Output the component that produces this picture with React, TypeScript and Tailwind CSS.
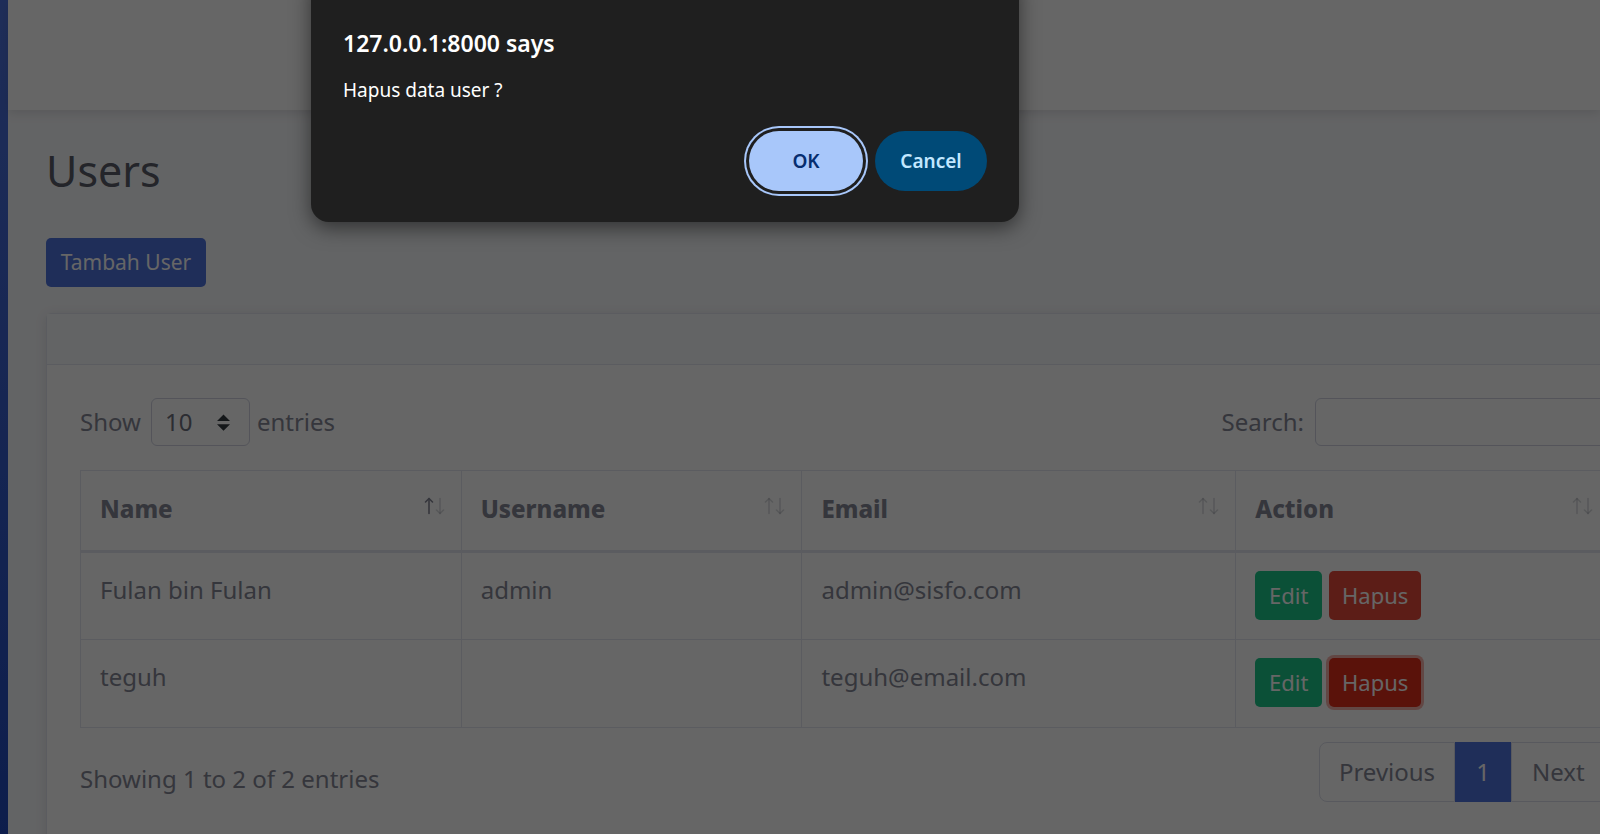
import React from "react";

const users = [
  { id: 1, name: "Fulan bin Fulan", username: "admin", email: "admin@sisfo.com", focused: false },
  { id: 2, name: "teguh", username: "", email: "teguh@email.com", focused: true },
];

const columns = [
  { label: "Name", width: "w-[381px]", active: true },
  { label: "Username", width: "w-[341px]", active: false },
  { label: "Email", width: "w-[434px]", active: false },
  { label: "Action", width: "w-[374px]", active: false },
];

// panah sort ala DataTables
const SortArrows = ({ active }: { active: boolean }) => (
  <svg width="22" height="18" viewBox="0 0 22 18" fill="none" strokeWidth="1.6" strokeLinecap="round" strokeLinejoin="round">
    <g className={active ? "stroke-[#858796]" : "stroke-[#858796]/30"}>
      <path d="M5 1.5V16.5" />
      <path d="M1.5 5L5 1.5L8.5 5" />
    </g>
    <g className="stroke-[#858796]/30">
      <path d="M16 1.5V16.5" />
      <path d="M12.5 13L16 16.5L19.5 13" />
    </g>
  </svg>
);

const SelectCaret = () => (
  <svg width="13" height="17" viewBox="0 0 4 5" className="fill-[#343a40]">
    <path d="M2 0L0 2h4zm0 5L0 3h4z" />
  </svg>
);

const App = () => {
  return (
    <div className="relative h-[834px] w-[1600px] overflow-hidden bg-[#f8f9fc] font-['Noto_Sans',sans-serif] text-[#858796]">
      <div className="flex h-full">
        {/* sidebar (hampir tertutup) */}
        <aside className="w-[8px] shrink-0 bg-gradient-to-b from-[#4e73df] to-[#224abe]" />

        <div className="min-w-0 flex-1">
          {/* topbar */}
          <header className="h-[110px] bg-white shadow-[0_3px_10px_rgba(58,59,69,0.15)]" />

          <main className="w-[1700px] pl-[38px]">
            <h1 className="mt-[35px] text-[43px] leading-[52px] font-normal text-[#5a5c69]">Users</h1>

            <button className="mt-[41px] h-[49px] w-[160px] rounded-[5px] bg-[#4e73df] text-[21px] text-white">
              Tambah User
            </button>

            {/* card tabel */}
            <div className="mt-[26px] rounded-[6px] border border-[#e3e6f0] bg-white shadow-[0_2px_12px_rgba(58,59,69,0.12)]">
              <div className="h-[51px] border-b border-[#e3e6f0] bg-[#f8f9fc]" />

              <div className="w-[1596px] px-[33px] pt-[33px] pb-[40px]">
                <div className="flex h-[48px] items-center justify-between text-[24px]">
                  <div className="flex items-center">
                    <span>Show</span>
                    <div className="ml-[10px] flex h-[48px] w-[99px] items-center justify-between rounded-[6px] border border-[#d1d3e2] pl-[13px] pr-[19px] text-[#6e707e]">
                      <span>10</span>
                      <SelectCaret />
                    </div>
                    <span className="ml-[7px]">entries</span>
                  </div>
                  <div className="flex items-center">
                    <span>Search:</span>
                    <div className="ml-[11px] h-[48px] w-[295px] rounded-[6px] border border-[#d1d3e2]" />
                  </div>
                </div>

                <table className="mt-[24px] table-fixed border-collapse text-[24px]">
                  <thead>
                    <tr>
                      {columns.map((col) => (
                        <th
                          key={col.label}
                          className={`${col.width} border border-b-[3px] border-[#e3e6f0] pl-[19px] pr-[15px] pt-[20px] pb-[23px] text-left align-top`}
                        >
                          <div className="flex h-[36px] items-start justify-between">
                            <span className="font-extrabold leading-[36px] text-[#858796]">{col.label}</span>
                            <span className="pt-[6px]">
                              <SortArrows active={col.active} />
                            </span>
                          </div>
                        </th>
                      ))}
                    </tr>
                  </thead>
                  <tbody>
                    {users.map((user) => (
                      <tr key={user.id}>
                        <td className="h-[88px] border border-[#e3e6f0] px-[19px] pt-[19px] align-top leading-[36px]">{user.name}</td>
                        <td className="border border-[#e3e6f0] px-[19px] pt-[19px] align-top leading-[36px]">{user.username}</td>
                        <td className="border border-[#e3e6f0] px-[19px] pt-[19px] align-top leading-[36px]">{user.email}</td>
                        <td className="border border-[#e3e6f0] px-[19px] pt-[18px] align-top">
                          <div className="flex gap-[7px] text-[22px]">
                            <button className="h-[49px] w-[67px] rounded-[5px] bg-[#1cc88a] text-white">Edit</button>
                            <button
                              className={
                                user.focused
                                  ? "h-[49px] w-[92px] rounded-[5px] bg-[#e02d1b] text-white ring-[3px] ring-[#eb6558]/50"
                                  : "h-[49px] w-[92px] rounded-[5px] bg-[#e74a3b] text-white"
                              }
                            >
                              Hapus
                            </button>
                          </div>
                        </td>
                      </tr>
                    ))}
                  </tbody>
                </table>

                <div className="mt-[14px] flex items-start justify-between text-[24px]">
                  <div className="pt-[19px] leading-[36px]">Showing 1 to 2 of 2 entries</div>
                  <div className="flex h-[60px]">
                    <div className="flex w-[136px] items-center justify-center rounded-l-[8px] border border-[#dddfeb] bg-white">
                      Previous
                    </div>
                    <div className="flex w-[56px] items-center justify-center border border-[#4e73df] bg-[#4e73df] text-white">
                      1
                    </div>
                    <div className="flex w-[99px] items-center rounded-r-[8px] border border-[#dddfeb] bg-white pl-[20px]">
                      Next
                    </div>
                  </div>
                </div>
              </div>
            </div>
          </main>
        </div>
      </div>

      {/* overlay dialog konfirmasi */}
      <div className="absolute inset-0 bg-black/60" />

      <div className="absolute left-[311px] top-[-30px] w-[708px] rounded-[18px] bg-[#1f1f1f] px-[32px] pt-[57px] pb-[31px] shadow-[0_6px_20px_rgba(0,0,0,0.5)] font-['Noto_Sans',sans-serif]">
        <div className="text-[23px] leading-[32px] font-semibold text-white">127.0.0.1:8000 says</div>
        <div className="mt-[19px] text-[19px] leading-[24px] text-white">Hapus data user ?</div>
        <div className="mt-[29px] flex justify-end gap-[12px]">
          <button className="h-[60px] w-[114px] rounded-full bg-[#a8c7fa] text-[19px] font-semibold text-[#062e6f] ring-2 ring-[#a8c7fa] ring-offset-[3px] ring-offset-[#1f1f1f]">
            OK
          </button>
          <button className="h-[60px] w-[112px] rounded-full bg-[#004a77] text-[19px] font-semibold text-[#c2e7ff]">
            Cancel
          </button>
        </div>
      </div>
    </div>
  );
};

export default App;
